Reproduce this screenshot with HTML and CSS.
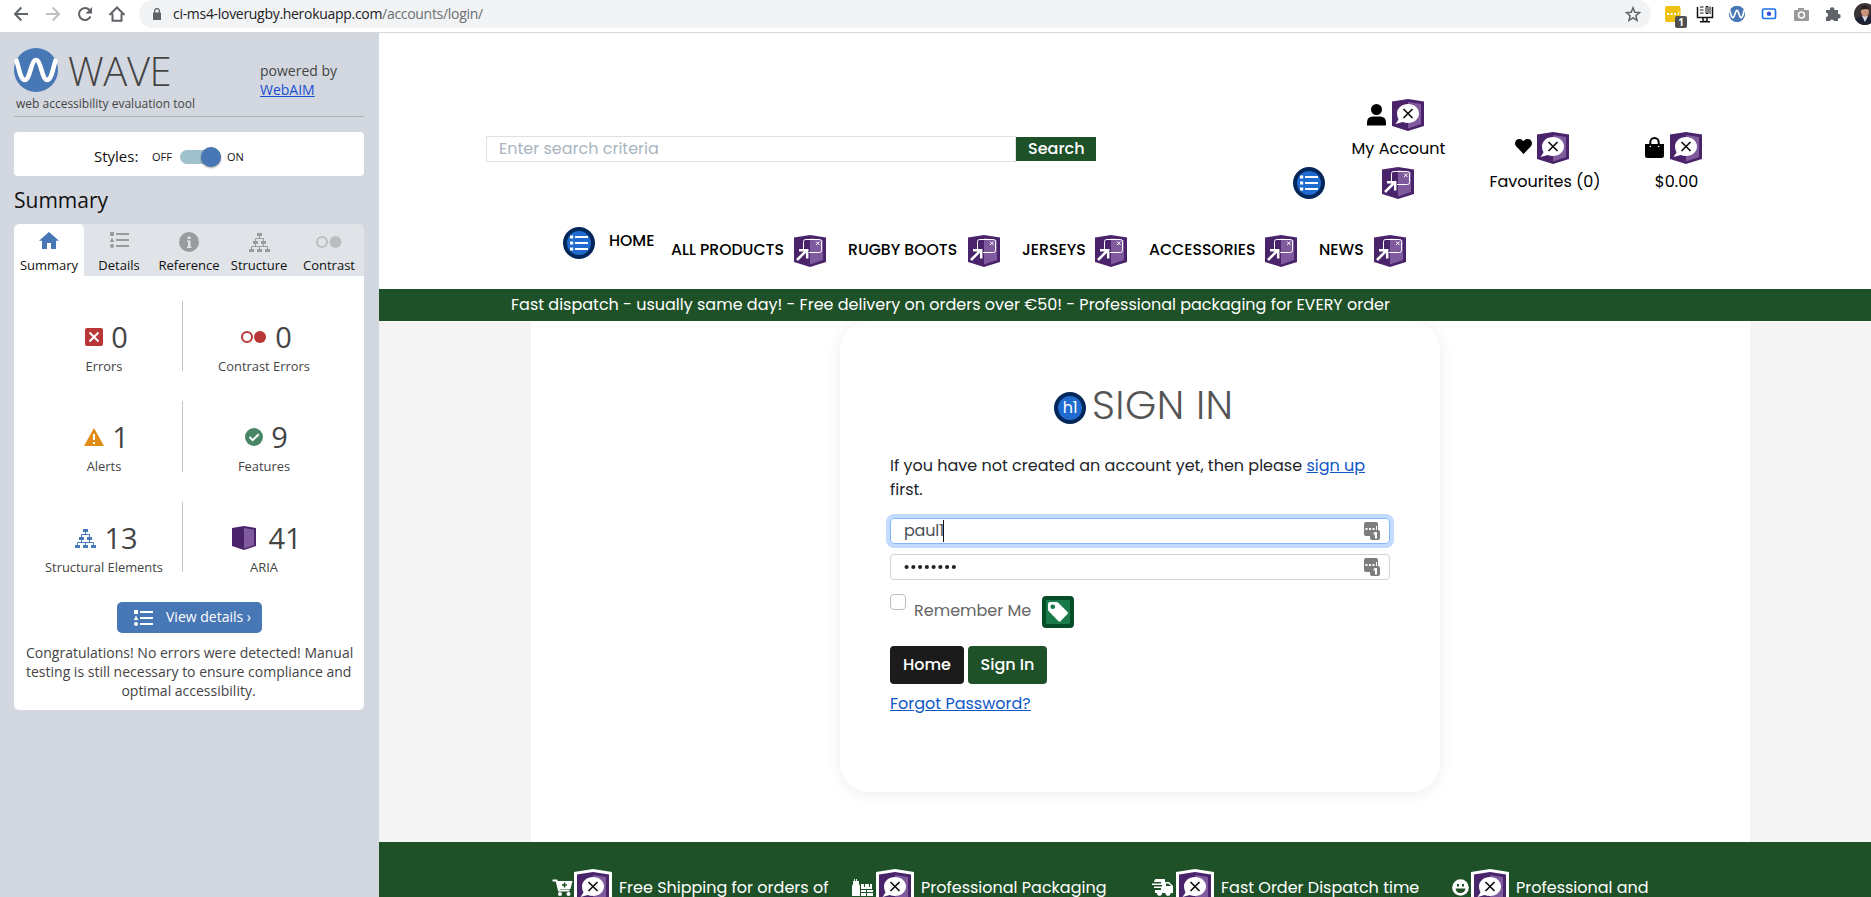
FILE: index.html
```html
<!DOCTYPE html>
<html lang="en">
<head>
<meta charset="utf-8">
<title>Sign In</title>
<link rel="stylesheet" href="styles.css">
</head>
<body>
<svg class="defs" aria-hidden="true">
  <symbol id="aria-label" viewBox="0 0 32 32">
    <path fill="#49246b" d="M0 2.500 16 0l16 2.500V27l-16 5L0 27z"/>
    <path fill="#7f5b9d" d="M16 3l13 2v20l-13 4.500z"/>
    <path fill="#fff" d="M16 5c6.200 0 11 4.200 11 9.500S22.200 24 16 24c-2 0-3.800-.3-5.300-1L3.500 25l3-4.500C5.500 18.500 5 16.500 5 14.500 5 9.200 9.800 5 16 5z"/>
    <path stroke="#111" stroke-width="1.700" d="M11.500 10l9 9M20.500 10l-9 9"/>
  </symbol>
  <symbol id="aria-popup" viewBox="0 0 32 32">
    <path fill="#49246b" d="M0 2.500 16 0l16 2.500V27l-16 5L0 27z"/>
    <path fill="#7f5b9d" d="M16 3l13 2v20l-13 4.500z"/>
    <path fill="none" stroke="#fff" d="M9.500 14V6.500q0-2 2-2h14q2 0 2 2v9q0 2-2 2H15"/>
    <path stroke="#fff" d="M22 6.500l3.500 3.500M25.500 6.500L22 10"/>
    <path fill="none" stroke="#fff" stroke-width="2.500" d="M3 25L12.500 15.500M5 15.200h8.200v8.300"/>
  </symbol>
  <symbol id="list-mark" viewBox="0 0 32 32">
    <circle cx="16" cy="16" r="14" fill="#1f6bd0" stroke="#03275b" stroke-width="4"/>
    <path stroke="#fff" stroke-width="2.200" d="M12 10h13M12 16h13M12 22h13"/>
    <path stroke="#fff" stroke-width="3.200" d="M7 10h3.200M7 16h3.200M7 22h3.200"/>
  </symbol>
  <symbol id="tree" viewBox="0 0 21 19">
    <path fill="currentColor" d="M8 0h5v3H8zM4 8h5v3H4zM12 8h5v3h-5zM0 16h5v3H0zM8 16h5v3H8zM16 16h5v3h-5z"/>
    <path fill="none" stroke="currentColor" d="M10.500 3v2.500M6.500 8V5.500h8V8M6.500 11v2.500M14.500 11v2.500M2.500 16v-2.500h16V16M10.500 13.500V16"/>
  </symbol>
  <symbol id="bullets" viewBox="0 0 19 16">
    <path fill="currentColor" d="M0 0h4v4H0zM2 5.500L4.300 10H-.3zM6 1h13v2H6zM6 7h13v2H6zM6 13h13v2H6z"/>
    <circle cx="2" cy="14" r="2" fill="currentColor"/>
  </symbol>
  <symbol id="wave" viewBox="0 0 44 44">
    <circle cx="22" cy="22" r="22" fill="#4877b5"/>
    <path fill="none" stroke="#fff" stroke-width="4.500" d="M2 11c3 8 4 21 9 21s6-20 11-20 6 20 11 20 6-13 9-21"/>
  </symbol>
  <symbol id="pass" viewBox="0 0 16 18">
    <path fill="#7d7d7d" d="M2 0h10q2 0 2 2v6q2 0 2 2v6q0 2-2 2H8q-2 0-2-2v-2H2q-2 0-2-2V2q0-2 2-2z"/>
    <path fill="#fff" d="M1.500 6h2v2h-2zM5 6h2v2H5zM8.500 6h2v2h-2zM12 4h1v4h-1zM11 10h2v6.500h-2v-4H9.500V11z"/>
  </symbol>
</svg>

<header class="toolbar">
  <svg class="tool" viewBox="0 0 20 20"><path class="ink" d="M17 10H4.500M10.300 3.500L4 10l6.300 6.500"/></svg>
  <svg class="tool pale" viewBox="0 0 20 20"><path class="ink" d="M3 10h12.500M9.700 3.500L16 10l-6.300 6.500"/></svg>
  <svg class="tool" viewBox="0 0 20 20"><path class="ink" d="M15.500 12.500A6 6 0 1 1 14.500 6"/><path fill="currentColor" d="M17 3v6.500h-6.500z"/></svg>
  <svg class="tool" viewBox="0 0 20 20"><path class="ink" d="M2.500 11L10 3.500l7.500 7.500M5.500 9.500v7.300h9V9.500"/></svg>
  <div class="omnibox">
    <svg class="lock" viewBox="0 0 8 12"><path fill="#5f6368" d="M0 4.500h8V12H0z"/><path fill="none" stroke="#5f6368" stroke-width="1.300" d="M1.700 5V3a2.300 2.300 0 0 1 4.600 0v2"/></svg>
    <span class="url"><span class="host">ci-ms4-loverugby.herokuapp.com</span><span class="path">/accounts/login/</span></span>
    <svg class="star" viewBox="0 0 20 20"><path fill="none" stroke="#5f6368" stroke-width="1.500" d="M10 3.800l1.800 4.400 4.700.4-3.600 3.100 1.100 4.700-4-2.500-4 2.500 1.100-4.700-3.600-3.100 4.700-.4z"/></svg>
  </div>
  <div class="extensions">
    <div class="ext"><svg viewBox="0 0 20 20"><rect x="2" y="2" width="15.500" height="16" rx="2" fill="#efc111"/><path fill="#fff" d="M4 9h2v2H4zM7.500 9h2v2h-2zM11 9h2v2h-2zM15 7.500h1V11h-1z"/></svg><span class="count">1</span></div>
    <svg class="ext" viewBox="0 0 20 20"><path fill="none" stroke="#111" stroke-width="1.500" d="M2.500 3v10.500h15V3M8 14v3.500h4V14M5 17.800h10"/><path fill="none" stroke="#111" d="M5 3h3.500M5 6h3.500M5 9h3.500M11 2.500h2v7h-2zM15 2.500V10"/></svg>
    <svg class="ext" viewBox="-5 -5 54 54"><use href="#wave" width="44" height="44"/></svg>
    <svg class="ext" viewBox="0 0 20 20"><rect x="3.500" y="5" width="13" height="9.500" rx="1.500" fill="#fff" stroke="#1a73e8" stroke-width="1.700"/><circle cx="10" cy="9.800" r="2.200" fill="#3b4fd8"/></svg>
    <svg class="ext" viewBox="0 0 20 20"><path fill="#999" d="M7 4h6v2h4q1 0 1 1v9q0 1-1 1H4q-1 0-1-1V7q0-1 1-1h3z"/><circle cx="10.500" cy="11" r="3" fill="none" stroke="#fff" stroke-width="1.500"/></svg>
    <svg class="ext" viewBox="0 0 20 20"><path fill="#5f6368" d="M3 6h4a2.200 2.200 0 1 1 4.300 0H15v4a2.200 2.200 0 1 1 0 4.300V17h-4a2.200 2.200 0 0 0-4.200 0H3v-4a2.100 2.100 0 0 0 0-4.200z"/></svg>
    <svg class="avatar" viewBox="0 0 22 22"><circle cx="11" cy="11" r="11" fill="#3a3434"/><path fill="#1c2233" d="M1 16q4-3 10-3t10 3q-4 6-10 6T1 16z"/><path fill="#d8dce6" d="M8 13h6l-3 6z"/><ellipse cx="11" cy="8.500" rx="4" ry="5.200" fill="#c8947c"/><path fill="#2b211e" d="M6.800 7q.5-4.500 4.200-4.500T15.200 7Q13 4.800 6.800 7z"/></svg>
  </div>
</header>

<div class="frame">
  <aside class="sidebar">
    <div class="brand">
      <div class="brand-main">
        <div class="brand-logo"><svg viewBox="0 0 44 44"><use href="#wave"/></svg><span class="brand-name">WAVE</span></div>
        <div class="tagline">web accessibility evaluation tool</div>
      </div>
      <div class="powered"><span class="powered-by">powered by</span><br><a href="#">WebAIM</a></div>
    </div>

    <div class="styles-card">
      <span class="styles-label">Styles:</span><span class="off">OFF</span>
      <span class="switch"></span><span class="on">ON</span>
    </div>

    <h2 class="heading">Summary</h2>
    <nav class="tabs">
      <div class="tab active"><div class="tab-icon"><svg width="20" height="17" viewBox="0 0 20 17"><path fill="#4877b5" d="M10 0l10 8.700h-3V17h-5v-6H8v6H3V8.700H0z"/></svg></div><span>Summary</span></div>
      <div class="tab"><div class="tab-icon"><svg width="19" height="16"><use href="#bullets"/></svg></div><span>Details</span></div>
      <div class="tab"><div class="tab-icon low"><svg width="20" height="20" viewBox="0 0 20 20"><circle cx="10" cy="10" r="10" fill="#999b9d"/><path fill="#e0e3e7" d="M8.700 4.500h2.800v2.400H8.700zM8 8.500h3.500v6h1V16H8v-1.500h1V10H8z"/></svg></div><span>Reference</span></div>
      <div class="tab"><div class="tab-icon low"><svg width="21" height="19"><use href="#tree"/></svg></div><span>Structure</span></div>
      <div class="tab"><div class="tab-icon low"><svg width="26" height="12" viewBox="0 0 26 12"><circle cx="6" cy="6" r="5" fill="none" stroke="#bbbec1" stroke-width="2"/><circle cx="19.500" cy="6" r="6" fill="#bbbec1"/></svg></div><span>Contrast</span></div>
    </nav>

    <section class="panel">
      <div class="stats">
        <div class="stat"><div class="figure"><svg width="18" height="18" viewBox="0 0 18 18"><rect width="18" height="18" rx="2" fill="#b93637"/><path stroke="#fff" stroke-width="2" d="M4.500 4.500l9 9M13.500 4.500l-9 9"/></svg><b>0</b></div><span>Errors</span></div>
        <div class="stat"><div class="figure"><svg width="26" height="12" viewBox="0 0 26 12"><circle cx="6" cy="6" r="5" fill="none" stroke="#b93637" stroke-width="2"/><circle cx="19" cy="6" r="6" fill="#b93637"/></svg><b>0</b></div><span>Contrast Errors</span></div>
        <div class="stat"><div class="figure"><svg width="20" height="18" viewBox="0 0 20 18"><path fill="#e08c16" d="M10 0l10 18H0z"/><path fill="#fff" d="M9 6h2v6H9zM9 14h2v2H9z"/></svg><b>1</b></div><span>Alerts</span></div>
        <div class="stat"><div class="figure"><svg width="18" height="18" viewBox="0 0 18 18"><circle cx="9" cy="9" r="9" fill="#488667"/><path fill="none" stroke="#fff" stroke-width="2" d="M4.500 9l3.200 3.200 6-6"/></svg><b>9</b></div><span>Features</span></div>
        <div class="stat"><div class="figure blue"><svg width="21" height="19"><use href="#tree"/></svg><b>13</b></div><span>Structural Elements</span></div>
        <div class="stat"><div class="figure wide"><svg width="24" height="24" viewBox="0 0 24 24"><path fill="#49246b" d="M0 2l12-2 12 2v18l-12 4-12-4z"/><path fill="#7f5b9d" d="M12 2l10 1.700v15.500L12 22.500z"/></svg><b>41</b></div><span>ARIA</span></div>
      </div>
      <button class="view-details"><svg width="19" height="16"><use href="#bullets"/></svg><span>View details ›</span></button>
      <div class="congrats">Congratulations! No errors were detected! Manual<br>testing is still necessary to ensure compliance and<br>optimal accessibility.</div>
    </section>
  </aside>

  <main class="site">
    <div class="site-top">
      <form class="search"><div class="search-box">Enter search criteria</div><div class="search-button">Search</div></form>
      <svg class="mark list"><use href="#list-mark"/></svg>
      <div class="account">
        <div class="pair"><svg width="19" height="22" viewBox="0 0 19 22"><circle cx="9.500" cy="5.500" r="5.500"/><path d="M0 21.500v-3Q0 12.500 6 12.500h7q6 0 6 6v3z"/></svg><svg class="mark"><use href="#aria-label"/></svg></div>
        <span>My Account</span>
        <svg class="mark popup"><use href="#aria-popup"/></svg>
      </div>
      <div class="favourites">
        <div class="pair"><svg width="17" height="15" viewBox="0 0 17 15"><path d="M8.500 15L1.300 7.600C-1.500 4.300.7 0 4.300 0c2 0 3.300 1 4.200 2.300C9.400 1 10.700 0 12.700 0c3.600 0 5.800 4.300 3 7.600z"/></svg><svg class="mark"><use href="#aria-label"/></svg></div>
        <span>Favourites (0)</span>
      </div>
      <div class="bag">
        <div class="pair"><svg width="19" height="21" viewBox="0 0 19 21"><path d="M0 7h19v11.500q0 2.500-2.500 2.500h-14Q0 21 0 18.500z"/><path fill="none" stroke="#000" stroke-width="2" d="M5.300 9V5.300a4.200 4.200 0 0 1 8.400 0V9"/><circle cx="5.300" cy="9.500" r=".8" fill="#fff"/><circle cx="13.700" cy="9.500" r=".8" fill="#fff"/></svg><svg class="mark"><use href="#aria-label"/></svg></div>
        <span>$0.00</span>
      </div>
    </div>

    <nav class="menu">
      <svg class="mark"><use href="#list-mark"/></svg>
      <span class="m-home">HOME</span>
      <div class="m-item i-all"><span>ALL PRODUCTS</span><svg class="mark"><use href="#aria-popup"/></svg></div>
      <div class="m-item i-boots"><span>RUGBY BOOTS</span><svg class="mark"><use href="#aria-popup"/></svg></div>
      <div class="m-item i-jerseys"><span>JERSEYS</span><svg class="mark"><use href="#aria-popup"/></svg></div>
      <div class="m-item i-acc"><span>ACCESSORIES</span><svg class="mark"><use href="#aria-popup"/></svg></div>
      <div class="m-item i-news"><span>NEWS</span><svg class="mark"><use href="#aria-popup"/></svg></div>
    </nav>

    <div class="banner">Fast dispatch - usually same day! - Free delivery on orders over €50! - Professional packaging for EVERY order</div>

    <div class="content">
      <div class="column">
        <section class="card">
          <div class="title"><div class="h1-mark">h1</div><h1>SIGN IN</h1></div>
          <p class="intro">If you have not created an account yet, then please <a href="#">sign up</a><br>first.</p>
          <div class="field focused"><span class="username">paul1</span><i class="caret"></i><svg width="16" height="18"><use href="#pass"/></svg></div>
          <div class="field"><svg width="53" height="6" viewBox="0 0 53 6"><path stroke="#212529" stroke-width="4.200" stroke-linecap="round" stroke-dasharray="0 6.750" d="M2.600 3h48"/></svg><svg width="16" height="18"><use href="#pass"/></svg></div>
          <div class="remember"><span class="checkbox"></span><span class="remember-text">Remember Me</span><svg class="tag" viewBox="0 0 32 32"><rect width="32" height="32" rx="4" fill="#064d27"/><rect x="4" y="4" width="24" height="24" rx="1" fill="#177a48"/><path fill="#fff" d="M8 6h6.500q1 0 1.800.8L25.500 16q1 1 0 2l-7 7.300q-1 1-2 0L7 15.500q-1-1-1-2V8q0-2 2-2z"/><circle cx="10.800" cy="10.800" r="2.300" fill="#177a48"/></svg></div>
          <div class="actions"><button class="home">Home</button><button class="sign-in">Sign In</button></div>
          <a href="#" class="forgot">Forgot Password?</a>
        </section>
      </div>
    </div>

    <footer class="perks">
      <div class="perk"><svg class="glyph" viewBox="0 0 20 17"><path fill="none" stroke="#fff" stroke-width="2" d="M0 1.500h4l2.500 10h10.500"/><path fill="#fff" d="M4.500 2H20l-2 8H6.500z"/><path stroke="#1e5128" stroke-width="1.500" d="M12 3.500v5M9.500 6h5"/><circle cx="7.500" cy="15" r="2" fill="#fff"/><circle cx="16" cy="15" r="2" fill="#fff"/></svg><svg class="ringed" viewBox="-3 -3 38 38"><path fill="#fff" d="M-3 0L16-3 35 0v35H-3z"/><use href="#aria-label" width="32" height="32"/></svg><span>Free Shipping for orders of</span></div>
      <div class="perk"><svg class="glyph" viewBox="0 0 21 17"><path fill="#fff" d="M1 2h1V0h1v2h1V0h1v2h2v3l1 2v10H0V7l1-2zM9 11h5v2H9zM15 11h6v2h-6zM9 14h5v3H9zM15 14h6v3h-6zM9 5h3v3h1V5h4v3h1V5h2v5H9z"/></svg><svg class="ringed" viewBox="-3 -3 38 38"><path fill="#fff" d="M-3 0L16-3 35 0v35H-3z"/><use href="#aria-label" width="32" height="32"/></svg><span>Professional Packaging</span></div>
      <div class="perk"><svg class="glyph" viewBox="0 0 21 17"><path fill="#fff" d="M3 0h10v3h4l4 4v7h-2.500a2.500 2.500 0 0 1-5 0H10a2.500 2.500 0 0 1-5 0H3v-3h6V9H2V7.500h8V6H0V4.500h9V3H2V1.500h1z"/><circle cx="7.500" cy="14.500" r="2.300" fill="#fff"/><circle cx="16" cy="14.500" r="2.300" fill="#fff"/><path fill="#1e5128" d="M14 4.500h2.500L19 7h-5z"/></svg><svg class="ringed" viewBox="-3 -3 38 38"><path fill="#fff" d="M-3 0L16-3 35 0v35H-3z"/><use href="#aria-label" width="32" height="32"/></svg><span>Fast Order Dispatch time</span></div>
      <div class="perk"><svg class="glyph" viewBox="0 0 17 17"><circle cx="8.500" cy="8.500" r="8.300" fill="#fff"/><path fill="#1e5128" d="M5 5h2v2.500H5zM10 5h2v2.500h-2zM3.500 9.500h10q-.8 4.500-5 4.500t-5-4.500z"/></svg><svg class="ringed" viewBox="-3 -3 38 38"><path fill="#fff" d="M-3 0L16-3 35 0v35H-3z"/><use href="#aria-label" width="32" height="32"/></svg><span>Professional and</span></div>
    </footer>
  </main>
</div>
</body>
</html>
```
FILE: styles.css
```css
* { box-sizing: border-box; }
body { margin: 0; width: 1871px; height: 897px; overflow: hidden; display: flex; flex-direction: column; background: #fff; font-family: "Open Sans", "Noto Sans", sans-serif; }
svg { display: block; flex: none; }
span, a, h1, h2 { white-space: nowrap; }
.defs { position: absolute; width: 0; height: 0; }

/* Browser toolbar */
.toolbar { display: flex; flex: none; height: 33px; padding: 0 0 0 11px; border-bottom: 1px solid #d6d8db; background: #fff; overflow: hidden; }
.tool { width: 20px; height: 20px; margin: 4px 12px 0 0; color: #5f6368; }
.tool.pale { color: #bdbfc1; }
.ink { fill: none; stroke: currentColor; stroke-width: 2; }
.omnibox { display: flex; flex: none; align-items: center; width: 1512px; height: 28px; padding: 0 8px 0 14px; border-radius: 14px; background: #f1f3f4; }
.lock { width: 8px; height: 12px; margin-right: 12px; }
.url { flex: 1; font-size: 14px; line-height: 28px; letter-spacing: -.3px; }
.host { color: #202124; }
.path { color: #6b6f73; }
.star { width: 20px; height: 20px; }
.extensions { display: flex; flex: none; gap: 12px; padding: 4px 0 0 12px; }
.ext { position: relative; width: 20px; height: 20px; flex: none; }
.count { position: absolute; left: 12px; top: 12px; width: 12px; height: 12px; border-radius: 2px; background: #4d4f52; color: #fff; font: bold 10px/12px "Open Sans", sans-serif; text-align: center; }
.avatar { width: 22px; height: 22px; margin: -1px 0 0 -1px; }

.frame { display: flex; flex: 1; min-height: 0; }

/* Evaluation sidebar */
.sidebar { width: 379px; flex: none; padding: 0 15px 0 14px; background: #d3d8e0; color: #444; }
.brand { display: flex; height: 84px; border-bottom: 1px solid #afb4b9; }
.brand-main { width: 246px; padding-top: 15px; }
.brand-logo { display: flex; height: 44px; }
.brand-logo svg { width: 44px; height: 44px; }
.brand-name { margin-left: 10px; font-size: 40px; font-weight: 300; line-height: 45px; letter-spacing: -.4px; }
.tagline { margin: 4px 0 0 2px; font-size: 12px; line-height: 16px; white-space: nowrap; }
.powered { padding-top: 28px; font-size: 14px; line-height: 19px; }
.powered a { color: #1b4fd0; }
.styles-card { display: flex; align-items: center; height: 44px; margin-top: 15px; padding: 4px 0 0 80px; border-radius: 4px; background: #fff; color: #111; }
.styles-label { width: 58px; font-size: 15px; }
.off { width: 28px; font-size: 11px; }
.on { margin-left: 6px; font-size: 11px; }
.switch { position: relative; width: 41px; height: 14px; margin-top: 1px; border-radius: 7px; background: #9fc1cb; }
.switch::after { content: ""; position: absolute; right: 0; top: -3px; width: 20px; height: 20px; border-radius: 50%; background: #4877b5; box-shadow: 0 1px 2px #0006; }
.heading { margin: 10px 0; color: #111; font-size: 21px; font-weight: 400; line-height: 28px; }
.tabs { display: flex; height: 52px; border-radius: 5px 5px 0 0; background: #e0e3e7; color: #111; overflow: hidden; }
.tab { display: flex; flex-direction: column; align-items: center; width: 70px; font-size: 13px; line-height: 18px; }
.tab.active { border-radius: 5px 5px 0 0; background: #fff; }
.tab-icon { display: flex; align-items: center; height: 32px; color: #999b9d; }
.tab-icon.low { padding-top: 4px; }
.panel { height: 434px; padding: 25px 0 0 12px; border-radius: 0 0 5px 5px; background: #fff; }
.stats { display: grid; grid-template-columns: 157px 162px; grid-template-rows: 70px 71px 70px; row-gap: 30px; }
.stat { display: flex; flex-direction: column; align-items: center; padding-top: 16px; font-size: 12.900px; line-height: 16px; }
.stat:nth-child(odd) { border-right: 1px solid #c6c6c6; }
.figure { display: flex; align-items: center; gap: 8px; height: 40px; margin-bottom: 1px; padding-left: 5px; }
.figure.blue svg { color: #4877b5; }
.figure.wide { gap: 12px; padding-left: 6px; }
.figure b { font-size: 29px; font-weight: 400; line-height: 40px; }
.view-details { display: flex; align-items: center; width: 145px; height: 31px; margin: 30px 0 0 91px; padding: 0 0 0 17px; border: 0; border-radius: 5px; background: #4877b5; color: #fff; font: 14px/19px "Open Sans", sans-serif; }
.view-details span { margin: -2px 0 0 13px; }
.congrats { margin: 10px 13px 0 0; font-size: 14px; line-height: 19px; text-align: center; white-space: nowrap; }

/* Shop page */
.site { width: 1492px; flex: none; background: #fff; color: #000; font-family: Poppins, Inter, sans-serif; font-size: 16px; line-height: 24px; }
.mark { width: 32px; height: 32px; }
.site-top { display: flex; align-items: flex-start; height: 194px; padding-left: 107px; }
.search { display: flex; margin-top: 103px; width: 610px; }
.search-box { width: 530px; height: 26px; padding-left: 12px; border: 1px solid #dee2e6; color: #a9b6c1; line-height: 24px; }
.search-button { width: 80px; height: 24px; margin-top: 1px; padding-left: 12px; background: #1e5128; color: #fff; font-weight: 500; line-height: 23px; }
.list { margin: 134px 0 0 197px; }
.account, .favourites, .bag { display: flex; flex-direction: column; align-items: center; }
.account { width: 93px; margin: 66px 0 0 27px; }
.pair { display: flex; align-items: center; gap: 6px; height: 32px; margin: 0 6px 6px 0; }
.popup { margin: 6px 2px 0 0; }
.favourites { width: 110px; margin: 99px 0 0 45px; }
.favourites .pair { gap: 5px; }
.favourites .pair svg:first-child { margin-top: -3px; }
.bag { width: 71px; margin: 99px 0 0 41px; }
.bag .pair svg:first-child { margin-top: -2px; }
.menu { display: flex; align-items: flex-start; height: 62px; padding-left: 184px; font-weight: 500; font-size: 15.700px; }
.m-home { width: 62px; margin: 2px 0 0 14px; }
.m-item { display: flex; justify-content: space-between; height: 32px; margin-top: 8px; margin-right: 22px; }
.m-item span { margin-top: 3px; }
.i-all { width: 155px; }
.i-boots { width: 152px; }
.i-jerseys { width: 105px; }
.i-acc { width: 148px; }
.i-news { width: 87px; }
.banner { height: 32px; padding-left: 132px; background: #1e5128; color: #fff; line-height: 31px; white-space: nowrap; }
.content { height: 521px; padding: 0 121px 0 152px; background: #f4f4f4; }
.column { height: 521px; padding-left: 309px; background: #fff; overflow: hidden; }
.card { width: 600px; height: 471px; padding: 71px 50px 0; border-radius: 30px; box-shadow: 0 2px 15px rgba(0, 0, 0, .08); color: #212529; }
.title { display: flex; height: 58px; padding-left: 164px; }
.h1-mark { width: 32px; height: 32px; border: 4px solid #03275b; border-radius: 50%; background: #1f6bd0; color: #fff; font-size: 16px; line-height: 24px; text-align: center; letter-spacing: -.5px; }
h1 { margin: -11px 0 0 6px; color: #555; font-size: 40px; font-weight: 300; line-height: 48px; letter-spacing: .45px; }
.intro { height: 48px; margin: 4px 0 16px; white-space: nowrap; }
a { color: #0f56c6; }
.field { display: flex; align-items: center; height: 26px; margin-bottom: 10px; padding: 0 9px 0 13px; border: 1px solid #ced4da; border-radius: 4px; color: #495057; }
.field svg:last-child { margin-left: auto; }
.username { width: 39px; letter-spacing: -.2px; }
.focused { border-color: #86b7fe; box-shadow: 0 0 0 4px #c2dbfe; }
.caret { width: 1px; height: 22px; background: #111; }
.remember { display: flex; height: 32px; margin-top: 16px; color: #666; }
.checkbox { width: 16px; height: 16px; margin-top: -2px; border: 1px solid #bfbfbf; border-radius: 4px; }
.remember-text { width: 128px; margin: 3px 0 0 8px; }
.tag { width: 32px; height: 32px; }
.actions { display: flex; gap: 4px; margin: 18px 0 8px; }
.actions button { height: 38px; padding: 0; border: 0; border-radius: 4px; background: #1e5128; color: #fff; font: 500 16px/24px Poppins, Inter, sans-serif; }
.actions .home { width: 74px; background: #1b1b1b; }
.actions .sign-in { width: 79px; }
.forgot { display: inline-block; }
.perks { display: flex; height: 55px; padding: 27px 0 0 173px; background: #1e5128; color: #fff; overflow: hidden; }
.perk { display: flex; width: 300px; }
.glyph { width: 21px; height: 17px; margin-top: 10px; }
.ringed { width: 38px; height: 38px; margin-left: 1px; }
.perk:nth-child(2) .ringed, .perk:nth-child(3) .ringed { margin-left: 3px; }
.perk:nth-child(4) .glyph { width: 17px; }
.perk:nth-child(4) .ringed { margin-left: 2px; }
.perk span { margin: 7px 0 0 7px; }
```
